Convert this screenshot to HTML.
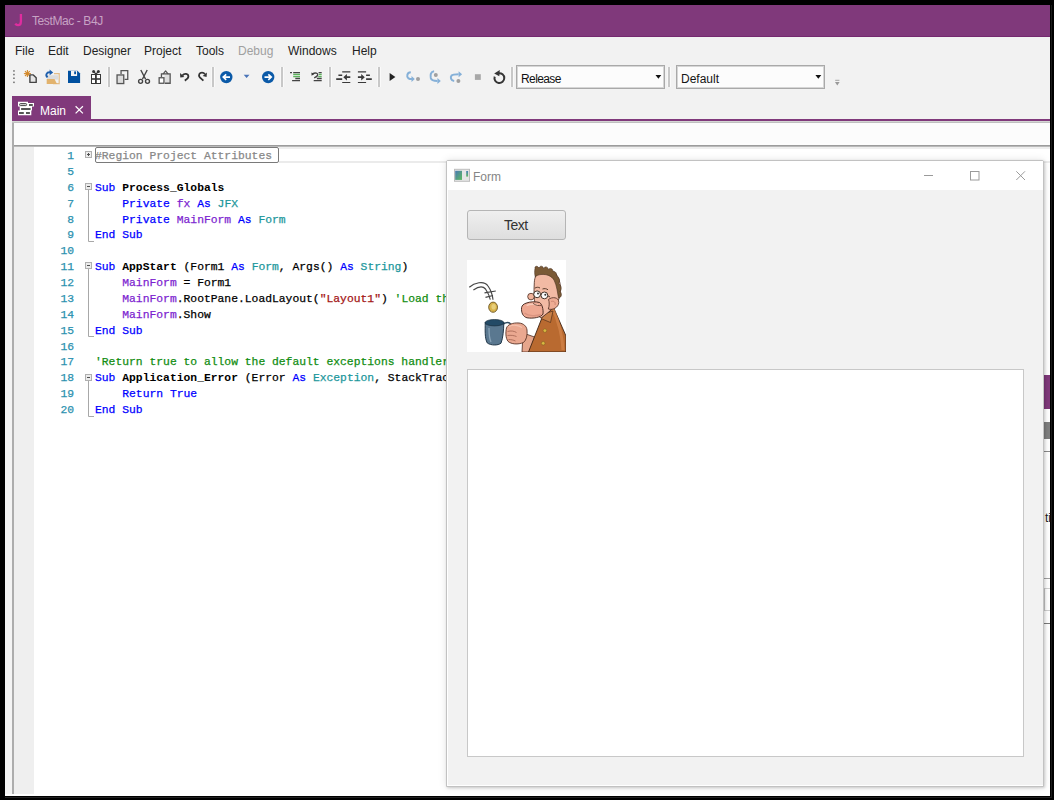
<!DOCTYPE html>
<html><head><meta charset="utf-8">
<style>
*{box-sizing:border-box;margin:0;padding:0}
html,body{width:1054px;height:800px;overflow:hidden;background:#000}
body{position:relative;font-family:"Liberation Sans",sans-serif}
.a{position:absolute}
#win{left:5px;top:5px;width:1045px;height:791px;background:#f2f2f2;overflow:hidden}
#title{left:0;top:0;width:1045px;height:32px;background:#80397b;border-bottom:1px solid #74296f}
.t{position:absolute;white-space:pre;line-height:1}
.menu{font-size:12px;color:#222}
.sep{position:absolute;width:2px;background:#c8c8c8;top:67px;height:20px;box-shadow:1px 0 0 #fafafa,-1px 0 0 #f8f8f8}
.combo{position:absolute;top:65px;height:24px;border:1px solid #a9a9a9;box-shadow:inset 0 0 0 1px #d6d6d6;background:#fcfcfc}
.code{font-family:"Liberation Mono",monospace;font-size:11.35px;line-height:15.87px;white-space:pre;-webkit-text-stroke:0.25px currentColor}
.ln{color:#2b91af;text-align:right}
.kw{color:#0000ff}
.bd{font-weight:bold;color:#000;-webkit-text-stroke:0}
.vr{color:#7d1fd0}
.ty{color:#1c979c}
.cm{color:#118d11}
.st{color:#a31515}
</style></head><body>
<div id="win" class="a">
  <div id="title" class="a"></div>
</div>
<!-- title -->
<svg class="a" style="left:10px;top:10px" width="20" height="20" viewBox="10 10 20 20"><path d="M20.9 13.9 V21.5 C20.9 24.3 19.6 25.2 18 25.2 C16.8 25.2 15.9 24.6 15.3 23.6" fill="none" stroke="#df2d9f" stroke-width="2.3"/></svg>
<div class="t" style="left:32px;top:15px;font-size:12px;color:#c7a3c4;letter-spacing:-0.4px">TestMac - B4J</div>

<!-- menu -->
<div class="t menu" style="left:15px;top:45px">File</div>
<div class="t menu" style="left:48px;top:45px">Edit</div>
<div class="t menu" style="left:83px;top:45px">Designer</div>
<div class="t menu" style="left:144px;top:45px">Project</div>
<div class="t menu" style="left:196px;top:45px">Tools</div>
<div class="t menu" style="left:238px;top:45px;color:#a0a0a0">Debug</div>
<div class="t menu" style="left:288px;top:45px">Windows</div>
<div class="t menu" style="left:352px;top:45px">Help</div>

<!-- toolbar separators -->
<div class="sep" style="left:108px"></div>
<div class="sep" style="left:212px"></div>
<div class="sep" style="left:281px"></div>
<div class="sep" style="left:328.5px"></div>
<div class="sep" style="left:377.5px"></div>
<div class="sep" style="left:511px"></div>
<div class="sep" style="left:668px"></div>

<!-- combos -->
<div class="combo" style="left:516px;width:149px"></div>
<div class="t" style="left:521px;top:73px;font-size:12px;color:#111;letter-spacing:-0.6px">Release</div>
<div class="combo" style="left:676px;width:149px"></div>
<div class="t" style="left:681px;top:73px;font-size:12px;color:#151515">Default</div>

<!-- tab -->
<div class="a" style="left:12px;top:96px;width:79px;height:25px;background:#80397b"></div>
<div class="a" style="left:12px;top:119px;width:1038px;height:2px;background:#80397b"></div>
<div class="a" style="left:12px;top:121px;width:1038px;height:1px;background:#d4d6d4"></div>
<div class="a" style="left:12px;top:122px;width:1038px;height:1px;background:#bfbfbf"></div>
<div class="t" style="left:40px;top:105px;font-size:12px;color:#fff">Main</div>

<!-- editor -->
<div class="a" style="left:5px;top:123px;width:7px;height:673px;background:#f4f4f4"></div>
<div class="a" style="left:12px;top:123px;width:2px;height:671px;background:#adadad"></div>
<div class="a" style="left:5px;top:794px;width:1045px;height:2px;background:#fdfdfd"></div>
<div class="a" style="left:14px;top:123px;width:1036px;height:22px;background:#fdfdfd"></div>
<div class="a" style="left:14px;top:145px;width:1036px;height:2px;background:#a3a3a3"></div>
<div class="a" style="left:14px;top:147px;width:1036px;height:649px;background:#fff"></div>
<div class="a" style="left:14px;top:147px;width:20px;height:647px;background:#efefef"></div>

<!-- current line -->
<div class="a" style="left:14px;top:123px;width:1036px;height:20px;background:#fcfcfc"></div>
<div class="a" style="left:14px;top:145px;width:1036px;height:1px;background:#9c9c9c"></div>
<div class="a" style="left:14px;top:146px;width:1036px;height:1px;background:#b9b9b9"></div>
<div class="a" style="left:279px;top:147px;width:771px;height:2px;background:#eeeeee"></div>
<div class="a" style="left:279px;top:161px;width:771px;height:2px;background:#ebebeb"></div>
<div class="a" style="left:95px;top:147px;width:184px;height:16px;border:1px solid #7a7a7a;border-radius:2px;background:#fff"></div>
<svg class="a" style="left:0;top:0" width="120" height="430" viewBox="0 0 120 430">
 <g fill="#ececec" stroke="#b0b0b0" stroke-width="1">
  <rect x="85.5" y="151.5" width="6" height="6"/>
  <rect x="85.5" y="183.5" width="6" height="6"/>
  <rect x="85.5" y="262.5" width="6" height="6"/>
  <rect x="85.5" y="374.5" width="6" height="6"/>
 </g>
 <g stroke="#505050" stroke-width="1">
  <path d="M87 154.5 H90 M88.5 153 V156"/>
  <path d="M87 186.5 H90 M87 265.5 H90 M87 377.5 H90"/>
 </g>
 <g stroke="#a8a8a8" stroke-width="1" fill="none">
  <path d="M88.5 190 V241.5 H94"/>
  <path d="M88.5 269 V336.5 H94"/>
  <path d="M88.5 381 V416.5 H94"/>
 </g>
</svg>
<!-- code -->
<div class="a code ln" style="left:39px;top:149px;width:35px">1
5
6
7
8
9
10
11
12
13
14
15
16
17
18
19
20</div>
<div class="a code" style="left:95px;top:149px;color:#000"><span style="color:#888">#Region Project Attributes</span>

<span class="kw">Sub</span> <span class="bd">Process_Globals</span>
    <span class="kw">Private</span> <span class="vr">fx</span> <span class="kw">As</span> <span class="ty">JFX</span>
    <span class="kw">Private</span> <span class="vr">MainForm</span> <span class="kw">As</span> <span class="ty">Form</span>
<span class="kw">End Sub</span>

<span class="kw">Sub</span> <span class="bd">AppStart</span> (Form1 <span class="kw">As</span> <span class="ty">Form</span>, Args() <span class="kw">As</span> <span class="ty">String</span>)
    <span class="vr">MainForm</span> = Form1
    <span class="vr">MainForm</span>.RootPane.LoadLayout(<span class="st">"Layout1"</span>) <span class="cm">'Load the layout file.</span>
    <span class="vr">MainForm</span>.Show
<span class="kw">End Sub</span>

<span class="cm">'Return true to allow the default exceptions handler to handle the uncaught exception.</span>
<span class="kw">Sub</span> <span class="bd">Application_Error</span> (Error <span class="kw">As</span> <span class="ty">Exception</span>, StackTrace <span class="kw">As</span> <span class="ty">StackTrace</span>) <span class="kw">As</span> <span class="kw">Boolean</span>
    <span class="kw">Return</span> <span class="kw">True</span>
<span class="kw">End Sub</span></div>

<div class="a" style="left:5px;top:797px;width:1046px;height:1px;background:#202020"></div>
<div class="a" style="left:1051px;top:5px;width:1px;height:793px;background:#1a1a1a"></div>
<!-- behind-form strip -->
<div class="a" style="left:1044px;top:375px;width:6px;height:34px;background:#80397b"></div>
<div class="a" style="left:1044px;top:422px;width:6px;height:17px;background:#7f7f7f"></div>
<div class="a" style="left:1044px;top:451px;width:6px;height:1px;background:#8a8a8a"></div>
<div class="t" style="left:1045px;top:512px;font-size:12px;color:#222">ti</div>
<div class="a" style="left:1044px;top:578px;width:6px;height:1px;background:#a0a0a0"></div>
<div class="a" style="left:1044px;top:588px;width:6px;height:23px;border-left:1px solid #c8c8c8;border-top:1px solid #d0d0d0;border-bottom:1px solid #d0d0d0"></div>
<div class="a" style="left:1044px;top:623px;width:6px;height:1px;background:#7a7a7a"></div>
<!-- form window -->
<div class="a" id="form" style="left:446px;top:160px;width:598px;height:627px;background:#f2f2f2;border:1px solid #c2c2c2;border-radius:2px 2px 0 0;box-shadow:inset 1px -1px 0 #fff,0 0 9px rgba(0,0,0,0.10),1px 1px 3px rgba(0,0,0,0.18)">
  <div class="a" style="left:0;top:0;width:596px;height:29px;background:#fff"></div>
  <div class="t" style="left:26px;top:10px;font-size:12px;color:#858585">Form</div>
  <div class="a" style="left:20px;top:49px;width:99px;height:30px;border:1px solid #b5b5b5;border-radius:3px;background:linear-gradient(#efefef,#dedede)"></div>
  <div class="t" style="left:57px;top:57px;font-size:14px;color:#333;letter-spacing:-0.5px">Text</div>
  <div class="a" style="left:20px;top:99px;width:99px;height:92px;background:#fff"></div>
  <div class="a" style="left:20px;top:208px;width:557px;height:388px;background:#fff;border:1px solid #c8c8c8"></div>
</div>
<svg class="a" style="left:440px;top:155px" width="600" height="40" viewBox="440 155 600 40">
 <rect x="454.5" y="169.3" width="15" height="12" fill="#e6e6e6" stroke="#bdbdbd" stroke-width="1"/>
 <defs><linearGradient id="fg" x1="0" y1="0" x2="1" y2="1"><stop offset="0" stop-color="#4a78b4"/><stop offset="1" stop-color="#5cbb5e"/></linearGradient>
 <linearGradient id="fg2" x1="0" y1="0" x2="0" y2="1"><stop offset="0" stop-color="#4a80b8"/><stop offset="1" stop-color="#60b860"/></linearGradient></defs>
 <rect x="455.2" y="170.8" width="6.8" height="9.1" fill="url(#fg)"/>
 <rect x="466.2" y="171" width="1.9" height="5.6" fill="url(#fg2)"/>
 <g stroke="#9a9a9a" stroke-width="1" fill="none">
  <path d="M924 175.5 H933"/>
  <rect x="970.5" y="171.5" width="8.5" height="8.5"/>
  <path d="M1016.3 171.3 L1025 180 M1025 171.3 L1016.3 180"/>
 </g>
</svg>
<svg class="a" style="left:467px;top:260px" width="99" height="92" viewBox="467 260 99 92">
 <rect x="467" y="260" width="99" height="92" fill="#fff"/>
 <g stroke="#333" stroke-width="1.2" fill="none" opacity="0.9">
  <path d="M469.3 287.2 C474 283 484 280 488 286 C490.5 289.5 492.5 295 493 299.7"/>
  <path d="M473.4 289.9 C477 287.5 482.5 285.5 485.5 289 C487.5 292 489.5 296 490.3 299.7"/>
  <path d="M484.5 292.8 L495.8 291 M485.5 297.3 L493 295.5"/>
 </g>
 <ellipse cx="493.1" cy="307.2" rx="4.4" ry="5.1" fill="#d8b24a" stroke="#6b5522" stroke-width="0.9"/>
 <ellipse cx="493.6" cy="306.8" rx="2.2" ry="2.8" fill="#e8cf7a"/>
 <path d="M503.2 324 C508.5 321 512.5 322.5 511.3 330" stroke="#2f4a5e" stroke-width="1.5" fill="none"/>
 <path d="M485.2 322.5 C485.3 330 484.5 338 487.3 343 C491 345.6 498 345.6 501 343.2 C503 338 503.7 330 503.8 322.5 Z" fill="#5a7890" stroke="#22384a" stroke-width="1"/>
 <path d="M489 328 C489 334 489 338 491 342" stroke="#8aa4b8" stroke-width="1.3" fill="none"/>
 <ellipse cx="494.5" cy="322.7" rx="9.4" ry="3.2" fill="#234a66" stroke="#1a2e3e" stroke-width="0.7"/>
 <path d="M523 333 L534.5 337 L531 352 L522 352 Z" fill="#e6a68c" stroke="#4a2a1e" stroke-width="0.8"/>
 <path d="M541.5 319 L528.5 352 L566 352 L566 336 L553.5 307.5 L548 313 Z" fill="#b96a30" stroke="#3e2414" stroke-width="0.9"/>
 <path d="M553 309 C557 318 562 330 563 350" stroke="#d88a50" stroke-width="3" fill="none" opacity="0.6"/>
 <path d="M541 318.5 L550.5 322.5 L553 311 L547 313 Z" fill="#c98048" stroke="#3e2414" stroke-width="0.6"/>
 <circle cx="544.9" cy="330.6" r="1.8" fill="#d8b840" stroke="#7a5a20" stroke-width="0.5"/>
 <circle cx="543.2" cy="343.3" r="1.8" fill="#d8b840" stroke="#7a5a20" stroke-width="0.5"/>
 <path d="M506.5 328 C507.5 324.5 513 322.5 519 323 C523.5 323.5 526.5 326 527 330 C527.5 335 526.5 340 523.5 342.5 C518 344.8 511 344.3 508 341.3 C505.5 338 505.5 332 506.5 328 Z" fill="#eaa890" stroke="#5a3326" stroke-width="0.9"/>
 <path d="M507.5 331.5 C511 330.5 514 331 516.5 332.5 M507.5 335.5 C511 335 514 335.5 516.5 336.5 M508.5 339.5 C511 339.5 513.5 340 515.5 341" stroke="#9a5a48" stroke-width="0.7" fill="none"/>
 <path d="M509 326.5 C513 324.5 519 325 522 327.5" stroke="#f6c8b4" stroke-width="1.2" fill="none" opacity="0.8"/>
 <path d="M535.3 277 C537 270 550 268 556 274 C561 280 562 292 558.5 300 C556 306 550 311 545 315 L541 318 C537 316 535 310 535 304 C534 298 533.8 290 534.2 285 C534.3 281 534.6 279 535.3 277 Z" fill="#f2baa4" stroke="#4a2a1e" stroke-width="0.8"/>
 <path d="M548.5 299.5 C552 296.5 559 297 558.8 302.5 C558.5 307.5 552.5 310.5 548.3 309 C549.5 306 549.5 302 548.5 299.5 Z" fill="#eeac94" stroke="#4a2a1e" stroke-width="0.8"/>
 <path d="M551 301.5 C553.5 300.5 556 302 555 305" stroke="#b87060" stroke-width="0.6" fill="none"/>
 <circle cx="531" cy="296.6" r="3.3" fill="#f0b49c" stroke="#4a2a1e" stroke-width="0.8"/>
 <path d="M526 303.2 C530 301.5 536 301.5 539.5 302.5 C542 304 543.5 309 543 314 C541 317.5 533 318.8 527 317.8 C523 316.8 521 312.5 521.6 307.5 C522 305.5 523.5 304 526 303.2 Z" fill="#eea892" stroke="#3a2018" stroke-width="0.9"/>
 <path d="M524.5 313 C528 316 536 316.5 541 314.5" stroke="#d08a78" stroke-width="1.4" fill="none" opacity="0.7"/>
 <path d="M526.5 305.5 C530 304 535 304 538 305" stroke="#fad4c4" stroke-width="1.5" fill="none" opacity="0.8"/>
 <path d="M533 303.3 C535.5 305.5 539 306 541.3 305.3" stroke="#4a2a1e" stroke-width="0.7" fill="none"/>
 <path d="M535 268.5 C534.5 265.8 537.5 265.5 539 268 C540 265.5 543 265.5 543.5 268.5 C545 266 548 266.5 548.3 269.5 C550 267.5 553 268.5 553 271.5 C555.5 271 557 273.5 556.5 276 C559.5 277.5 560.5 281 558.5 283.5 C561.5 285.5 562 289 560 291.5 C562.5 294 561.5 297.5 558.5 298 C557.5 293 557 286 554 280 C551.5 276 547 274 541 274.5 C538.5 274.8 536.5 275.5 535.3 277 C534.5 274 534.5 271 535 268.5 Z" fill="#7a5a36" stroke="#4a3020" stroke-width="0.6"/>
 <g fill="#fbfbfb" stroke="#3a2a20" stroke-width="0.95">
  <circle cx="537.1" cy="294.3" r="3.4"/><circle cx="544.4" cy="295.4" r="3.4"/>
 </g>
 <path d="M540.5 294.6 L541 294.8 M547.8 295.8 L550 297" stroke="#3a2a20" stroke-width="0.9"/>
 <g fill="#333"><circle cx="538" cy="293.6" r="1"/><circle cx="545.3" cy="294.7" r="1"/></g>
 <path d="M534.8 288.2 C536.5 287 538.5 287 540 288 M542.5 289 C544.5 288.3 546.5 288.6 548 289.8" stroke="#4a3020" stroke-width="0.9" fill="none"/>
</svg>
<!-- toolbar icons -->
<svg class="a" style="left:0;top:0" width="1054" height="125" viewBox="0 0 1054 125">
 <g fill="#6a6a6a">
  <rect x="13.2" y="70.2" width="1.5" height="1.5"/><rect x="13.2" y="73.8" width="1.5" height="1.5"/>
  <rect x="13.2" y="77.5" width="1.5" height="1.5"/><rect x="13.2" y="81.6" width="1.5" height="1.5"/>
 </g>
 <!-- new -->
 <g stroke="#d4892a" stroke-width="1.1">
  <line x1="23.9" y1="73.6" x2="30.9" y2="73.6"/><line x1="27.4" y1="70.1" x2="27.4" y2="77.1"/>
  <line x1="25" y1="71.2" x2="29.8" y2="76"/><line x1="25" y1="76" x2="29.8" y2="71.2"/>
 </g>
 <path d="M29.9 82.4 V74.9 H33.3 L36.2 77.8 V82.4 Z" fill="#e6e6e6" stroke="#444" stroke-width="1.4" stroke-linejoin="round"/>
 <!-- open -->
 <path d="M54 73.6 H59.2 V83.6 H53" fill="none" stroke="#e3bd88" stroke-width="1.2"/>
 <rect x="47" y="75.2" width="11.2" height="4.4" fill="#dcdcdc"/>
 <path d="M46.7 79.1 H54.5 L57 83.9 H46.7 Z" fill="#e2b36e"/>
 <path d="M47.6 77.3 C45.3 75.5 46.2 72 50.2 72.3" stroke="#1e5fad" stroke-width="1.9" fill="none"/>
 <path d="M53.2 72.4 L49.6 69.6 V75.2 Z" fill="#1e5fad"/>
 <!-- save -->
 <path d="M68 70.8 H77.5 L80.1 73.5 V83.1 H68 Z" fill="#0050a0"/>
 <rect x="71" y="70.8" width="6.1" height="5.2" fill="#f4f4f4"/>
 <rect x="74.2" y="71.4" width="1.8" height="2.8" fill="#0050a0"/>
 <!-- build -->
 <rect x="91" y="74" width="10" height="10" fill="#383838"/>
 <g fill="#fff"><rect x="92" y="75" width="3" height="3.2"/><rect x="96.8" y="75" width="3.2" height="3.2"/>
 <rect x="92" y="79.8" width="3" height="3.2"/><rect x="96.8" y="79.8" width="3.2" height="3.2"/></g>
 <g fill="#383838"><circle cx="93.6" cy="71.5" r="1.5"/><circle cx="98.4" cy="71.5" r="1.5"/></g>
 <path d="M93.6 71.5 L96 74.2 L98.4 71.5" stroke="#383838" stroke-width="1.2" fill="none"/>
 <!-- copy -->
 <path d="M121.05 74 V70.65 H127.75 V79.35 H124.6" fill="none" stroke="#555" stroke-width="1.3"/>
 <rect x="117.05" y="74.95" width="6.7" height="8.6" fill="#dcdcdc" stroke="#555" stroke-width="1.3"/>
 <!-- cut -->
 <g stroke="#444" stroke-width="1.4" fill="none">
  <path d="M140.8 70 L145.6 79.3 M147.2 70 L142.4 79.3"/>
  <circle cx="140.6" cy="81.35" r="2"/><circle cx="147.5" cy="81.35" r="2"/>
 </g>
 <!-- paste -->
 <rect x="164.5" y="74" width="5.2" height="9" fill="#dedede"/>
 <path d="M163.4 73.8 H161.45 V77" fill="none" stroke="#555" stroke-width="1.3"/>
 <path d="M167.8 73.8 H170.15 V83.25 H165" fill="none" stroke="#555" stroke-width="1.3"/>
 <path d="M163.2 73.8 L165.6 70.9 L168 73.8 Z" fill="none" stroke="#555" stroke-width="1.2" stroke-linejoin="round"/>
 <rect x="159.15" y="77.75" width="4.8" height="5.5" fill="#fff" stroke="#555" stroke-width="1.3"/>
 <!-- undo/redo -->
 <path d="M182.3 75.6 C184.3 73 188.4 73.4 188.4 76.6 C188.4 78.4 186.5 79.6 184.8 80.6" fill="none" stroke="#333" stroke-width="1.8"/>
 <path d="M180 73 L180.3 77.6 L184.3 76.9 Z" fill="#333"/>
 <path d="M203.4 80.7 L199.8 77.3 C198 75.2 199.5 72.6 202 72.6 C203.5 72.6 204.3 73.3 205 74.3" fill="none" stroke="#333" stroke-width="1.8"/>
 <path d="M206.9 72.5 L206.6 76.9 L202.7 75.9 Z" fill="#333"/>
 <!-- nav -->
 <circle cx="226.3" cy="77.1" r="6.2" fill="#0b5aa8"/>
 <path d="M230 77.1 H223.6 M226.2 74.3 L223.2 77.1 L226.2 79.9" stroke="#fff" stroke-width="1.6" fill="none"/>
 <path d="M243.7 74.8 H249.5 L246.6 78 Z" fill="#4a74b8"/>
 <circle cx="268.2" cy="77.1" r="6.2" fill="#0b5aa8"/>
 <path d="M264.5 77.1 H270.9 M268.3 74.3 L271.3 77.1 L268.3 79.9" stroke="#fff" stroke-width="1.6" fill="none"/>
 <!-- comment -->
 <g stroke-width="1.3" fill="none">
  <path d="M290 72.7 H292 M293.2 72.6 H300 M295.3 78.5 H300 M292.1 80.6 H300" stroke="#444"/>
  <path d="M293.2 74.5 H300 M293.2 76.6 H300" stroke="#5cb35c"/>
  <path d="M318.6 72.6 H321.7 M316.9 78.5 H321.7 M313.7 80.6 H321.7" stroke="#444"/>
  <path d="M319 74.5 H321.7 M318.2 76.6 H321.7" stroke="#5cb35c"/>
 </g>
 <path d="M312.8 73.9 C315 72.2 318.4 72.9 317.6 75.4 C317.1 76.5 315.6 77.3 314.2 77.9" fill="none" stroke="#444" stroke-width="1.4"/>
 <path d="M311.4 72.4 L311.6 75.8 L314.3 73.9 Z" fill="#333"/>
 <!-- outdent/indent -->
 <g stroke="#3a3a3a" fill="none">
  <path d="M342.2 71.8 H350.3 M342.2 82.5 H350.3 M357.9 71.8 H366.1 M357.9 82.5 H366.1" stroke-width="1.2"/>
  <path d="M338.4 75.2 H342.2 M336.2 79.1 H342.2 M366.1 75.2 H369.9 M366.1 79.1 H371.8" stroke-width="1.6"/>
  <path d="M345.5 77.2 H350.3 M357.9 77.2 H362.5" stroke-width="1.8"/>
 </g>
 <path d="M343.3 77.2 L346.9 73.9 V80.5 Z M364.8 77.2 L361.2 73.9 V80.5 Z" fill="#3a3a3a"/>
 <!-- debug -->
 <path d="M389.6 73 L395.4 77 L389.6 81 Z" fill="#222"/>
 <g fill="none" stroke="#85b0d8" stroke-width="2">
  <path d="M410.8 72.3 C407 72.5 406.2 76.5 408.5 78.4 C409.5 79.1 410.8 79.1 412.2 79.1"/>
  <path d="M434.1 71.3 C430.6 71.6 430.2 75 430.8 78 C431.4 80.6 433.5 81 437.4 81"/>
  <path d="M454.2 81 C450.6 80.6 450.2 77 451.6 75.5 C452.6 74.4 454 74.2 458.6 74.2"/>
 </g>
 <path d="M414.8 79.1 L411.5 76.1 V82.1 Z M440.8 81 L437.4 78 V84 Z M462.1 74.2 L458.6 71.2 V77.2 Z" fill="#85b0d8"/>
 <g fill="#a0a0a0"><circle cx="418" cy="79.1" r="2"/><circle cx="435.8" cy="75.1" r="2"/><circle cx="458.4" cy="81" r="2"/></g>
 <rect x="474.9" y="74.2" width="5.9" height="5.7" fill="#a8a8a8"/>
 <path d="M498.6 73.25 A4.9 4.9 0 1 1 494.7 76.6" fill="none" stroke="#353535" stroke-width="2"/>
 <path d="M494.2 73.4 L499.8 69.9 L499.3 76.3 Z" fill="#353535"/>
 <!-- combo arrows / overflow -->
 <path d="M655.5 75 H661.3 L658.4 78.8 Z M815.4 75 H821.3 L818.35 78.8 Z" fill="#111"/>
 <path d="M835.2 80.3 H839.4" stroke="#999" stroke-width="0.9"/>
 <path d="M835 82 H839.6 L837.3 85.5 Z" fill="#999"/>
 <!-- tab icon -->
 <path d="M18 101.8 H28 V103 H34 V106.5 H32 V110.5 H31.3 V115.3 H18 V110.5 H19.7 V106.5 H18 Z" fill="#fff"/>
 <rect x="19.6" y="103.6" width="7" height="2" rx="0.8" fill="#ddd" stroke="#444" stroke-width="1"/>
 <g fill="#444"><rect x="29" y="104.1" width="3.8" height="1.8"/><rect x="21.1" y="108.1" width="9.5" height="1.8"/>
 <rect x="19" y="112.1" width="4.8" height="1.8"/><rect x="26" y="112.1" width="3.9" height="1.8"/></g>
 <path d="M75.6 106.2 L82.9 113.4 M82.9 106.2 L75.6 113.4" stroke="#fff" stroke-width="1.2"/>
</svg>
</body></html>
